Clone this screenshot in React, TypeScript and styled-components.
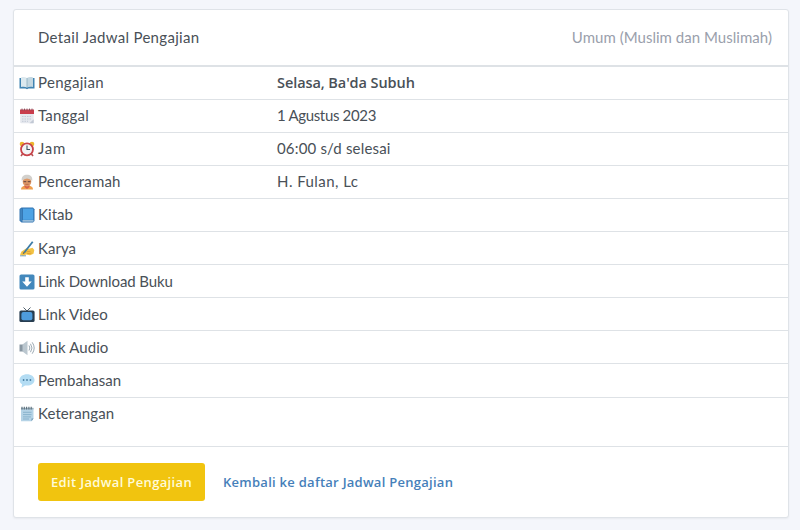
import React from 'react';
import styled, { createGlobalStyle } from 'styled-components';

const GlobalStyle = createGlobalStyle`
  * { box-sizing: border-box; }
  body {
    margin: 0;
    background: #f4f6fb;
    color: #495057;
    font: 15px/22px Lato, 'Trebuchet MS', sans-serif;
  }
`;

const Page = styled.main`
  height: 530px;
  padding: 9px 11px 12px 13px;
`;

const Card = styled.section`
  display: flex;
  flex-direction: column;
  height: 509px;
  background: #fff;
  border: 1px solid #dfe3e8;
  border-radius: 3px;
  box-shadow: 0 1px 2px rgba(0, 0, 0, 0.05);
`;

const CardHeader = styled.header`
  display: flex;
  justify-content: space-between;
  align-items: center;
  height: 57px;
  padding: 0 16px 2px 24px;
  border-bottom: 2px solid #dee2e6;
`;

const Title = styled.h1`
  margin: 0;
  font-size: 15px;
  font-weight: 400;
  letter-spacing: 0.32px;
`;

const Audience = styled.span`
  color: #9aa0ac;
  letter-spacing: 0.03px;
`;

const Rows = styled.dl`
  flex: 1;
  margin: 0;
`;

const Row = styled.div<{ $height: number; $low?: boolean }>`
  display: grid;
  grid-template-columns: 258px 1fr;
  height: ${(p) => p.$height}px;
  padding: ${(p) => (p.$low ? 5 : 4)}px 5px 0;
  border-bottom: 1px solid #dee2e6;

  &:last-child { border-bottom: 0; }
`;

const Label = styled.dt<{ $track: number }>`
  display: flex;
  gap: 4px;
  margin-left: -1px;
  letter-spacing: ${(p) => p.$track}px;
`;

const Value = styled.dd<{ $track: number; $strong?: boolean }>`
  margin: 0;
  padding-top: ${(p) => (p.$strong ? 1 : 0)}px;
  font-family: ${(p) => (p.$strong ? "'Open Sans', sans-serif" : 'inherit')};
  font-size: ${(p) => (p.$strong ? 14.5 : 15)}px;
  font-weight: ${(p) => (p.$strong ? 600 : 400)};
  letter-spacing: ${(p) => p.$track}px;
`;

const Icon = styled.svg`
  flex: none;
  width: 16px;
  height: 16px;
  margin: 4px -0.5px 0 0.5px;
`;

const CardFooter = styled.footer`
  display: flex;
  align-items: center;
  gap: 18px;
  height: 71px;
  padding: 0 24px;
  border-top: 1px solid #dee2e6;
  font-family: 'Open Sans', sans-serif;
  font-size: 13px;
  font-weight: 600;
`;

const EditButton = styled.button`
  width: 167px;
  height: 38px;
  padding: 0;
  border: 0;
  border-radius: 3px;
  background: #f1c40f;
  color: #fffbd8;
  font: inherit;
  letter-spacing: 0.35px;
  white-space: nowrap;
`;

const BackLink = styled.a`
  padding-bottom: 1px;
  color: #467fba;
  letter-spacing: 0.27px;
  text-decoration: none;
`;

const icons = {
  book: (
    <>
      <path d="M0.5 3h15v10.5h-6l-1.5.8-1.5-.8h-6z" fill="#3f83b2" />
      <path d="M2 2.4c2.4-.6 4.5-.3 6 .7v9.4c-1.6-.9-3.6-1-6-.6z" fill="#dce9ef" />
      <path d="M14 2.4c-2.4-.6-4.5-.3-6 .7v9.4c1.6-.9 3.6-1 6-.6z" fill="#c3d7e1" />
      <path d="M8 3v9.5" stroke="#8cacbe" strokeWidth=".8" />
    </>
  ),
  calendar: (
    <>
      <rect x="1.2" y="2" width="13.5" height="13.3" rx="1" fill="#e5e8ee" />
      <path d="M1 1.500h14v4.500H1z" fill="#c93d4c" />
      <path d="M3 .6v2M5.5.6v2M8 .6v2M10.500.6v2M13 .6v2" stroke="#81505c" strokeWidth="1" />
      <path d="M3 8.500h10M3 11h10M3 13.300h6" stroke="#c3cad6" strokeWidth="1" strokeDasharray="1.500 1" />
      <path d="M10.500 15.300l4.200-4v4z" fill="#c1c8d4" />
    </>
  ),
  alarm: (
    <>
      <path d="M3.500 13l-1.500 2M12.500 13l1.500 2" stroke="#b44f50" strokeWidth="1.600" />
      <circle cx="3" cy="3" r="2.300" fill="#edb52e" />
      <circle cx="13" cy="3" r="2.300" fill="#edb52e" />
      <circle cx="8" cy="8.300" r="6" fill="#f2f4f6" stroke="#c84249" strokeWidth="1.800" />
      <path d="M8 4.500v4h3" fill="none" stroke="#445563" strokeWidth="1.100" />
    </>
  ),
  person: (
    <>
      <path d="M2 15.500c.2-3 2.300-4 6-4s5.800 1 6 4z" fill="#f0a04e" />
      <path d="M5.500 10.500h5v2.500L8 15l-2.500-2z" fill="#d8604a" />
      <ellipse cx="8" cy="7.800" rx="4.300" ry="4.600" fill="#df9966" />
      <path d="M2.800 7C1.900 2.500 5 .7 8 .7s6.100 1.800 5.200 6.300L11.500 5.500 8 4.500l-3.500 1z" fill="#d2d0cc" />
      <path d="M4.500 7.600h2.800M8.700 7.600h2.800" stroke="#765044" strokeWidth="1.100" />
      <path d="M6.300 10.300h3.400" stroke="#ae5d47" strokeWidth=".8" />
    </>
  ),
  blueBook: (
    <>
      <path d="M.5 2L2.500.5h11.500l1.500 1.700V14l-1.500 1.500H2.500L.5 13.800z" fill="#3477b4" />
      <path d="M3.500 13.300h11v1.200h-11z" fill="#c5dceb" />
      <path d="M4 1.600h10.200v11.200H4z" fill="#4da3e5" />
      <path d="M2.200 2v11.800" stroke="#4389c4" strokeWidth="1.200" />
    </>
  ),
  writing: (
    <>
      <path d="M1 13.800l1.500-3.300 4.500-3 3 .2 3.500-1 1.800 2.300-.8 3.800-3.500 1.500-3.500-.8-3.500 1z" fill="#f3c344" />
      <path d="M7.500 10.800l4-.5M8 12.700l4.500-.6M3.500 12l3-.5" stroke="#d79535" strokeWidth=".8" />
      <path d="M5.300 11.500L13.700.8" stroke="#3d7ca7" strokeWidth="1.800" />
      <path d="M3.800 13.300l.8-2.200 1.300 1z" fill="#425b6b" />
      <path d="M1 14.800h6" stroke="#52819d" strokeWidth=".8" />
    </>
  ),
  download: (
    <>
      <rect x=".5" y=".5" width="15" height="15" rx="1.600" fill="#4388bc" />
      <path d="M6.200 3.300h3.600v4.200h3L8 12.800 3.200 7.500h3z" fill="#fff" />
    </>
  ),
  tv: (
    <>
      <path d="M4.500 .5L8 4l3.500-3.500" fill="none" stroke="#51616d" strokeWidth="1" />
      <rect x=".4" y="3.400" width="15.200" height="11.600" rx="1.600" fill="#273d50" />
      <rect x="2.400" y="5" width="11" height="8.200" rx="2" fill="#4e9cdc" />
    </>
  ),
  speaker: (
    <>
      <path d="M.5 4.500h3.500v7H.5z" fill="#8997a2" />
      <path d="M3.500 4.500L8.500.8v14.400L3.500 11.500z" fill="#bbc7cf" />
      <path d="M10 5.500q1.800 2.500 0 5M11.500 3.800q3 4.200 0 8.400M13.200 2.300q4 5.700 0 11.400" fill="none" stroke="#9caab4" strokeWidth="1" />
    </>
  ),
  bubble: (
    <>
      <path d="M8 1.200c4.200 0 7.500 2.400 7.500 5.700s-3.300 5.700-7.500 5.700l-2-.2L2.500 14.800l.6-3.500C1.500 10.300.5 8.700.5 6.900.5 3.600 3.800 1.200 8 1.200z" fill="#b3dcf3" />
      <circle cx="4.600" cy="7" r=".9" fill="#497fa3" />
      <circle cx="8" cy="7" r=".9" fill="#497fa3" />
      <circle cx="11.400" cy="7" r=".9" fill="#497fa3" />
    </>
  ),
  notepad: (
    <>
      <path d="M2 2h12.500v10.500l-2 2.800H2z" fill="#b5d3e6" />
      <path d="M12.500 15.300v-2.800h2z" fill="#7098b3" />
      <path d="M2 1.800h12.500v1.600H2z" fill="#9fb2be" />
      <path d="M3 .8v2.700M5.300.8v2.700M7.600.8v2.700M9.900.8v2.700M12.200.8v2.700" stroke="#586d7b" strokeWidth="1.100" />
      <path d="M4 6.300h8.500M4 8.600h8.500M4 10.900h8M4 13h6" stroke="#7ea9c5" strokeWidth=".8" />
    </>
  ),
};

type Entry = {
  icon: keyof typeof icons;
  label: string;
  labelTrack: number;
  value?: string;
  valueTrack?: number;
  strong?: boolean;
  low?: boolean;
  height?: number;
};

const entries: Entry[] = [
  { icon: 'book', label: 'Pengajian', labelTrack: 0.31, value: "Selasa, Ba'da Subuh", valueTrack: -0.08, strong: true },
  { icon: 'calendar', label: 'Tanggal', labelTrack: 0.21, value: '1 Agustus 2023', valueTrack: -0.33 },
  { icon: 'alarm', label: 'Jam', labelTrack: 0.72, value: '06:00 s/d selesai', valueTrack: 0.17 },
  { icon: 'person', label: 'Penceramah', labelTrack: 0.18, value: 'H. Fulan, Lc', valueTrack: 0.45 },
  { icon: 'blueBook', label: 'Kitab', labelTrack: 0.05 },
  { icon: 'writing', label: 'Karya', labelTrack: 0.03, low: true },
  { icon: 'download', label: 'Link Download Buku', labelTrack: -0.1, low: true },
  { icon: 'tv', label: 'Link Video', labelTrack: 0.07, low: true },
  { icon: 'speaker', label: 'Link Audio', labelTrack: 0.1, low: true },
  { icon: 'bubble', label: 'Pembahasan', labelTrack: 0.03, low: true, height: 34 },
  { icon: 'notepad', label: 'Keterangan', labelTrack: 0.09 },
];

export default function App() {
  return (
    <Page>
      <GlobalStyle />
      <Card>
        <CardHeader>
          <Title>Detail Jadwal Pengajian</Title>
          <Audience>Umum (Muslim dan Muslimah)</Audience>
        </CardHeader>
        <Rows>
          {entries.map((e) => (
            <Row key={e.label} $height={e.height ?? 33} $low={e.low}>
              <Label $track={e.labelTrack}>
                <Icon viewBox="0 0 16 16" aria-hidden="true">{icons[e.icon]}</Icon>
                {e.label}
              </Label>
              <Value $track={e.valueTrack ?? 0} $strong={e.strong}>{e.value}</Value>
            </Row>
          ))}
        </Rows>
        <CardFooter>
          <EditButton type="button">Edit Jadwal Pengajian</EditButton>
          <BackLink href="#">Kembali ke daftar Jadwal Pengajian</BackLink>
        </CardFooter>
      </Card>
    </Page>
  );
}
